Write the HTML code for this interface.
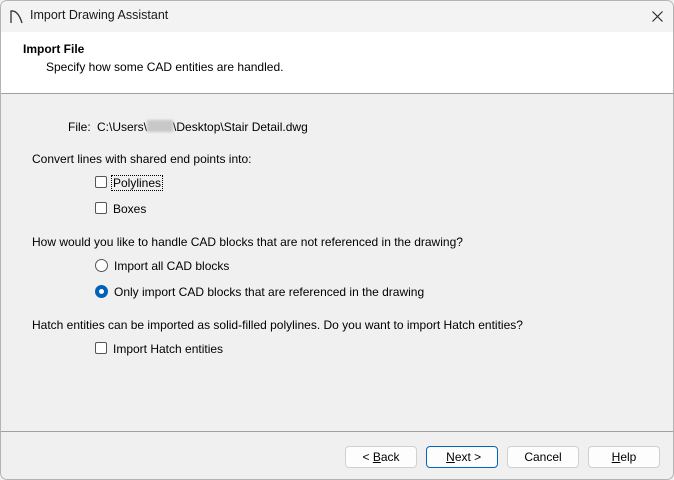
<!DOCTYPE html>
<html><head><style>
*{margin:0;padding:0;box-sizing:border-box}
body{width:674px;height:480px;overflow:hidden;font-family:"Liberation Sans",sans-serif;font-size:12px;color:#000;background:#f0f0f0;position:relative}
.win{position:absolute;left:0;top:0;width:674px;height:480px;border:1px solid #b4b4b4;border-radius:7px;overflow:hidden;background:#f0f0f0}
.title{position:absolute;left:0;top:0;width:672px;height:31px;background:#f3f3f3}
.hdr{position:absolute;left:0;top:31px;width:672px;height:62px;background:#fff;border-bottom:1px solid #a0a0a0}
.t{position:absolute;white-space:nowrap}
.cb{position:absolute;width:12px;height:12px;border:1px solid #555;border-radius:2px;background:#fff}
.rb{position:absolute;width:13px;height:13px;border:1px solid #555;border-radius:50%;background:#fff}
.btn{position:absolute;top:445px;width:72px;height:22px;border:1px solid #d0d0d0;border-radius:4px;background:#fdfdfd;text-align:center;line-height:20px}
u{text-decoration:underline}
</style></head><body><div class="win">
<div class="title">
<svg style="position:absolute;left:8px;top:7px" width="16" height="16" viewBox="0 0 16 16"><path d="M2 15V3 Q9 2 13 15" fill="none" stroke="#333" stroke-width="1.3"/></svg>
<div class="t" style="left:29px;top:7px;font-size:12.5px;color:#1a1a1a">Import Drawing Assistant</div>
<svg style="position:absolute;left:651px;top:10px" width="11" height="11" viewBox="0 0 11 11"><path d="M0.5 0.5L10.5 10.5M10.5 0.5L0.5 10.5" stroke="#222" stroke-width="1.1"/></svg>
</div>
<div class="hdr">
<div class="t" style="left:22px;top:10px;font-weight:bold">Import File</div>
<div class="t" style="left:45px;top:28px">Specify how some CAD entities are handled.</div>
</div>
<div class="t" style="left:67px;top:119px">File:</div>
<div class="t" style="left:96px;top:119px">C:\Users\<span style="display:inline-block;width:26px;height:12px;background:#c8c8c8;vertical-align:-1px;filter:blur(1px)"></span>\Desktop\Stair Detail.dwg</div>
<div class="t" style="left:31px;top:151px">Convert lines with shared end points into:</div>
<div class="cb" style="left:94px;top:175px"></div>
<div class="t" style="left:110px;top:174px;border:1px dotted #000;padding:0 1px">Polylines</div>
<div class="cb" style="left:94px;top:201px"></div>
<div class="t" style="left:112px;top:201px">Boxes</div>
<div class="t" style="left:31px;top:234px">How would you like to handle CAD blocks that are not referenced in the drawing?</div>
<div class="rb" style="left:94px;top:258px"></div>
<div class="t" style="left:113px;top:258px">Import all CAD blocks</div>
<div class="rb" style="left:94px;top:284px;border:4px solid #0061b8"></div>
<div class="t" style="left:113px;top:284px">Only import CAD blocks that are referenced in the drawing</div>
<div class="t" style="left:31px;top:317px">Hatch entities can be imported as solid-filled polylines. Do you want to import Hatch entities?</div>
<div class="cb" style="left:94px;top:341px"></div>
<div class="t" style="left:112px;top:341px">Import Hatch entities</div>
<div style="position:absolute;left:0;top:430px;width:672px;height:1px;background:#a0a0a0"></div>
<div class="btn" style="left:344px">&lt; <u>B</u>ack</div>
<div class="btn" style="left:425px;border-color:#0067c0">&nbsp;<u>N</u>ext &gt;</div>
<div class="btn" style="left:506px">Cancel</div>
<div class="btn" style="left:587px"><u>H</u>elp</div>
</div></body></html>
